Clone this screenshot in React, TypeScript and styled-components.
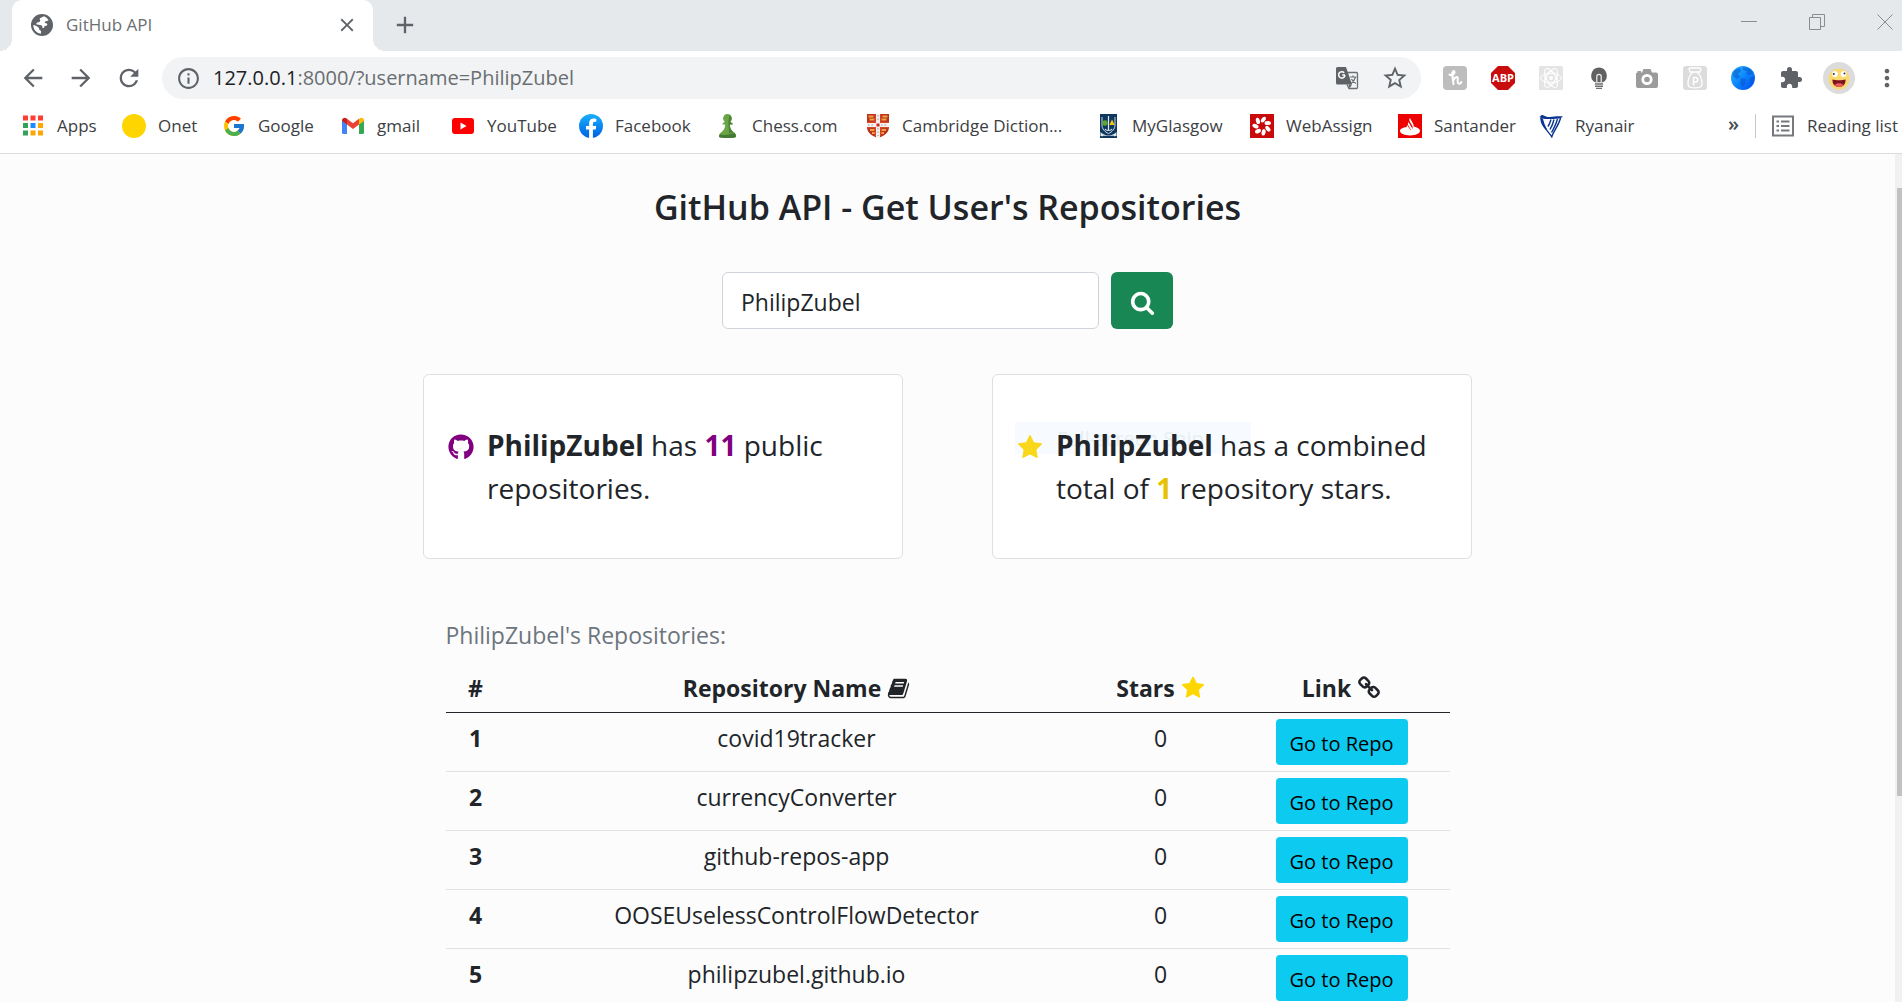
import React from 'react';
import styled, { createGlobalStyle } from 'styled-components';
import {
  MdArrowBack,
  MdArrowForward,
  MdRefresh,
  MdInfoOutline,
  MdStarBorder,
  MdExtension,
  MdMoreVert,
  MdClose,
  MdAdd,
} from 'react-icons/md';
import { FaGithub } from 'react-icons/fa';
import { FcGoogle } from 'react-icons/fc';

const Global = createGlobalStyle`
  *, *::before, *::after { box-sizing: border-box; }
  body {
    margin: 0;
    background: #fcfcfc;
    color: #212529;
    font-family: "Segoe UI", "Open Sans", "Noto Sans", sans-serif;
  }
  a { color: inherit; text-decoration: none; }
  button, input { font: inherit; }
`;

/* ---------- browser frame ---------- */

const Window = styled.div`
  display: flex;
  flex-direction: column;
  height: 100vh;
  overflow: hidden;
`;

const TabStrip = styled.div`
  display: flex;
  align-items: stretch;
  height: 51px;
  padding-left: 12px;
  background: #e6e9ec;
`;

const Tab = styled.div`
  position: relative;
  display: flex;
  align-items: center;
  width: 361px;
  padding: 0 14px 2px 18px;
  gap: 12px;
  background: #fff;
  border-radius: 10px 10px 0 0;
  color: #6b6f73;
  font-size: 17px;
  line-height: 24px;

  &::before,
  &::after {
    content: '';
    position: absolute;
    bottom: 0;
    width: 12px;
    height: 12px;
  }
  &::before {
    left: -12px;
    background: radial-gradient(circle at 0 0, transparent 12px, #fff 12px);
  }
  &::after {
    right: -12px;
    background: radial-gradient(circle at 100% 0, transparent 12px, #fff 12px);
  }
`;

const TabTitle = styled.span`
  flex: 1;
`;

const IconButton = styled.button<{ $size?: number; $color?: string }>`
  display: inline-flex;
  align-items: center;
  justify-content: center;
  flex: none;
  width: ${(p) => p.$size ?? 24}px;
  height: ${(p) => p.$size ?? 24}px;
  padding: 0;
  border: 0;
  background: none;
  color: ${(p) => p.$color ?? '#5f6368'};
  cursor: pointer;
`;

const NewTab = styled.div`
  display: flex;
  align-items: center;
  padding: 0 0 2px 18px;
`;

const WindowControls = styled.div`
  display: flex;
  align-items: center;
  gap: 44px;
  margin-left: auto;
  padding: 0 5px 7px 0;
`;

const Toolbar = styled.div`
  display: flex;
  align-items: center;
  height: 54px;
  padding: 0 1px 0 19px;
  background: #fff;
`;

const NavButtons = styled.div`
  display: flex;
  gap: 20px;
  margin-right: 19px;
`;

const Omnibox = styled.div`
  display: flex;
  align-items: center;
  flex: 1;
  min-width: 0;
  height: 42px;
  padding: 0 12px;
  border-radius: 21px;
  background: #f1f3f4;
`;

const Address = styled.div`
  flex: 1;
  min-width: 0;
  padding-left: 11px;
  overflow: hidden;
  white-space: nowrap;
  font-size: 20px;
  line-height: 28px;
  color: #6a6e72;
`;

const Host = styled.span`
  color: #202124;
`;

const OmniboxActions = styled.div`
  display: flex;
  gap: 20px;
`;

const Extensions = styled.div`
  display: flex;
  align-items: center;
  gap: 24px;
  margin: 0 18px 0 22px;
`;

const Account = styled.div`
  display: flex;
  align-items: center;
  gap: 16px;
`;

const BookmarksBar = styled.nav`
  display: flex;
  align-items: center;
  height: 49px;
  padding: 0 4px 7px 21px;
  border-bottom: 1px solid #dadce0;
  background: #fff;
  color: #3c4043;
  font-size: 17px;
  line-height: 24px;
  white-space: nowrap;
`;

const Bookmark = styled.a<{ $width?: number }>`
  display: flex;
  align-items: center;
  gap: 12px;
  flex: none;
  width: ${(p) => (p.$width ? `${p.$width}px` : 'auto')};

  & > svg {
    flex: none;
  }
`;

const BarEnd = styled.div`
  display: flex;
  align-items: center;
  margin-left: auto;
`;

const More = styled.button`
  padding: 0 16px 4px;
  border: 0;
  background: none;
  color: #4a4d51;
  font-size: 20px;
  font-weight: 600;
  line-height: 24px;
`;

const Divider = styled.span`
  width: 1px;
  height: 24px;
  margin-right: 15px;
  background: #c6c9cc;
`;

/* ---------- page ---------- */

const Viewport = styled.div`
  display: flex;
  flex: 1;
  min-height: 0;
`;

const Page = styled.main`
  flex: 1;
  min-width: 0;
  overflow: hidden;
  padding: 32px 16px 0;
`;

const ScrollTrack = styled.div`
  width: 7px;
  padding: 34px 0 0 2px;
  background: #f1f1f1;
`;

const ScrollThumb = styled.div`
  height: 608px;
  background: #c1c1c1;
`;

const Title = styled.h1`
  margin: 0 0 44px;
  font-size: 34px;
  font-weight: 600;
  line-height: 42px;
  text-align: center;
`;

const SearchForm = styled.form`
  display: flex;
  gap: 12px;
  max-width: 451px;
  margin: 0 auto 45px;
`;

const SearchInput = styled.input`
  flex: 1;
  min-width: 0;
  height: 57px;
  padding: 3px 18px 0;
  border: 1px solid #ced4da;
  border-radius: 6px;
  background: #fff;
  color: #212529;
  font-size: 23px;
  outline: 0;
`;

const SearchButton = styled.button`
  display: flex;
  align-items: center;
  justify-content: center;
  width: 62px;
  padding: 4px 0 0;
  border: 0;
  border-radius: 6px;
  background: #198754;
  color: #fff;
  cursor: pointer;
`;

const Cards = styled.section`
  display: flex;
  justify-content: space-between;
  gap: 24px;
  max-width: 1049px;
  margin: 0 auto 57px;
`;

const Card = styled.article`
  position: relative;
  z-index: 0;
  display: flex;
  gap: 13px;
  width: 480px;
  padding: 49px 24px 48px;
  border: 1px solid #dfdfdf;
  border-radius: 6px;
  background: #fff;
`;

const CardIcon = styled.span<{ $color: string }>`
  display: flex;
  align-items: center;
  justify-content: center;
  flex: none;
  width: 26px;
  height: 46px;
  color: ${(p) => p.$color};
`;

const CardText = styled.p`
  margin: 0;
  font-size: 28px;
  line-height: 43px;
`;

const Figure = styled.strong<{ $color: string }>`
  color: ${(p) => p.$color};
`;

const SnipHint = styled.span`
  position: absolute;
  z-index: -1;
  top: 47px;
  left: 22px;
  width: 236px;
  height: 32px;
  padding-left: 42px;
  background: #f7fbff;
  color: #e9eef1;
  font-size: 20px;
  line-height: 34px;
  pointer-events: none;
`;

const Repositories = styled.section`
  max-width: 1004px;
  margin: 0 auto;
`;

const Caption = styled.h2`
  margin: 0 0 10px;
  color: #6c757d;
  font-size: 23px;
  font-weight: 400;
  line-height: 38px;
`;

const Table = styled.table`
  width: 100%;
  border-collapse: collapse;
  table-layout: fixed;
  text-align: center;
  font-size: 23px;
  line-height: 38px;
`;

const Column = styled.col<{ $width?: number }>`
  width: ${(p) => (p.$width ? `${p.$width}px` : 'auto')};
`;

const HeadCell = styled.th`
  height: 48px;
  padding: 0;
  border-bottom: 1px solid #212529;
  font-weight: 700;

  & > svg {
    vertical-align: -3px;
  }
`;

const Cell = styled.td`
  height: 59px;
  padding: 6px 0;
  border-bottom: 1px solid #dee2e6;
  vertical-align: top;
`;

const RepoLink = styled.a`
  display: inline-block;
  width: 132px;
  height: 46px;
  padding-top: 2px;
  border-radius: 4px;
  background: #0dcaf0;
  color: #000;
  font-size: 20px;
  line-height: 46px;
  vertical-align: top;
`;

/* ---------- icons ---------- */

const SEARCH =
  'M1216 832q0-185-131.5-316.5t-316.5-131.5-316.5 131.5-131.5 316.5 131.5 316.5 316.5 131.5 316.5-131.5 131.5-316.5zm512 832q0 52-38 90t-90 38q-54 0-90-38l-343-342q-179 124-399 124-143 0-273.5-55.5t-225-150-150-225-55.5-273.5 55.5-273.5 150-225 225-150 273.5-55.5 273.5 55.5 225 150 150 225 55.5 273.5q0 220-124 399l343 343q37 37 37 90z';
const STAR =
  'M1728 647q0 22-26 48l-363 354 86 500q1 7 1 20 0 21-10.5 35.5t-30.5 14.5q-19 0-40-12l-449-236-449 236q-22 12-40 12-21 0-31.5-14.5t-10.5-35.5q0-6 2-20l86-500-364-354q-25-27-25-48 0-37 56-46l502-73 225-455q19-41 49-41t49 41l225 455 502 73q56 9 56 46z';
const BOOK =
  'M1703 478q40 57 18 129l-275 906q-19 64-76.5 107.5t-122.5 43.5h-923q-77 0-148.5-53.5t-99.5-131.5q-24-67-2-127 0-4 3-27t4-37q1-8-3-21.5t-3-19.5q2-11 8-21t16.5-23.5 16.5-23.5q23-38 45-91.5t30-91.5q3-10 .5-30t-.5-28q3-11 17-28t17-23q21-36 42-92t25-90q1-9-2.5-32t.5-28q4-13 22-30.5t22-22.5q19-26 42.5-84.5t27.5-96.5q1-8-3-25.5t-2-26.5q2-8 9-18t18-23 17-21q8-12 16.5-30.5t15-35 16-36 19.5-32 26.5-23.5 36-11.5 47.5 5.5l-1 3q38-9 51-9h761q74 0 114 56t18 130l-274 906q-36 119-71.5 153.5t-128.5 34.5h-869q-27 0-38 15-11 16-1 43 24 70 144 70h923q29 0 56-15.5t35-41.5l300-987q7-22 5-57 38 15 59 43zm-1064 2q-4 13 2 22.5t20 9.5h608q13 0 25.5-9.5t16.5-22.5l21-64q4-13-2-22.5t-20-9.5h-608q-13 0-25.5 9.5t-16.5 22.5zm-83 256q-4 13 2 22.5t20 9.5h608q13 0 25.5-9.5t16.5-22.5l21-64q4-13-2-22.5t-20-9.5h-608q-13 0-25.5 9.5t-16.5 22.5z';
const LINK =
  'M1520 1216q0-40-28-68l-208-208q-28-28-68-28-42 0-72 32 3 3 19 18.5t21.5 21.5 15 19 13 25.5 3.5 27.5q0 40-28 68t-68 28q-15 0-27.5-3.5t-25.5-13-19-15-21.5-21.5-18.5-19q-33 31-33 73 0 40 28 68l206 207q27 27 68 27 40 0 68-26l147-146q28-28 28-67zm-703-705q0-40-28-68l-206-207q-28-28-68-28-39 0-68 27l-147 146q-28 28-28 67 0 40 28 68l208 208q27 27 68 27 42 0 72-31-3-3-19-18.5t-21.5-21.5-15-19-13-25.5-3.5-27.5q0-40 28-68t68-28q15 0 27.5 3.5t25.5 13 19 15 21.5 21.5 18.5 19q33-31 33-73zm895 705q0 120-85 203l-147 146q-83 83-203 83-121 0-204-85l-206-207q-83-83-83-203 0-123 88-209l-88-88q-86 88-208 88-120 0-204-84l-208-208q-84-84-84-204t85-203l147-146q83-83 203-83 121 0 204 85l206 207q83 83 83 203 0 123-88 209l88 88q86-88 208-88 120 0 204 84l208 208q84 84 84 204z';

const Glyph = ({ d, size, color = 'currentColor' }: { d: string; size: number; color?: string }) => (
  <svg width={size} height={size} viewBox="0 0 1792 1792" fill={color} aria-hidden="true">
    <path d={d} />
  </svg>
);

const Svg = ({ children, size = 24 }: { children: React.ReactNode; size?: number }) => (
  <svg width={size} height={size} viewBox="0 0 24 24" aria-hidden="true">
    {children}
  </svg>
);

const TabGlobe = () => (
  <Svg>
    <circle cx="12" cy="12" r="11" fill="#5f6368" />
    <path
      d="M14 3.200C13 4 10.500 4.400 9.800 5.600C9.200 6.800 11 7.400 10 8.600C9 9.800 6.600 9 6.400 10.800C6.300 12 8 11.800 10 12C12 12.200 12.500 13 12.300 14.300C12.200 15.500 14 15.400 14.200 13.900C14.300 12.600 15.800 13 16.800 12.400C17.800 11.700 17.400 10.300 16 10.200C14.600 10.200 14.400 9.200 15.200 8.600C16.200 8 17.500 8.200 18.600 7.200C17.500 5.200 15.800 3.900 14 3.200Z"
      fill="#fff"
    />
    <path d="M3.300 12C5 12.400 7 13 8.500 14.500C9.500 15.600 8.800 17 10.400 17.600C11.600 18 11 19.400 10.800 20.700C6.300 20 3.200 16.300 3.300 12Z" fill="#fff" />
  </Svg>
);

const TranslateIcon = () => (
  <Svg>
    <path d="M12 6.500h9.500a1 1 0 0 1 1 1V21.500a1 1 0 0 1-1 1H14l-2-4" fill="none" stroke="#6b6f73" strokeWidth="1.300" />
    <path d="M2.500 1H11l6 17.500H2.500A1.500 1.500 0 0 1 1 17V2.500A1.500 1.500 0 0 1 2.500 1Z" fill="#5f6368" />
    <path d="M10 9H7.200M9.200 6.700A3.200 3.200 0 1 0 10 9.200" fill="none" stroke="#fff" strokeWidth="1.500" />
    <path d="M15 11h6.500M18 9.500V11M20.500 11C19.500 14.500 17.500 16.500 16 17.500M16.500 13C17.500 15 19.500 17 21 17.500" fill="none" stroke="#6b6f73" strokeWidth="1.200" />
    <path d="M13.500 18.500H17l-2.500 4z" fill="#5f6368" />
  </Svg>
);

const ReadingListIcon = () => (
  <Svg>
    <rect x="2" y="2.500" width="20" height="19" fill="none" stroke="#75797d" strokeWidth="2" />
    <path d="M5.500 7.500H8M5.500 12H8M5.500 16.500H8M10 7.500h8.500M10 12h8.500M10 16.500h8.500" stroke="#75797d" strokeWidth="2" />
  </Svg>
);

const AppsIcon = () => (
  <Svg>
    {['#ff3d33', '#ff3d33', '#ff3d33', '#34a05a', '#1a8cff', '#fba705', '#34a05a', '#fba705', '#fba705'].map((fill, i) => (
      <rect key={i} x={2 + (i % 3) * 7.5} y={1.5 + Math.floor(i / 3) * 7.5} width="5" height="5" fill={fill} />
    ))}
  </Svg>
);

const OnetIcon = () => (
  <Svg>
    <circle cx="12" cy="12" r="12" fill="#ffd500" />
  </Svg>
);

const GmailIcon = () => (
  <Svg>
    <path d="M1 6.500V18.500A1.500 1.500 0 0 0 2.500 20H6V9.800Z" fill="#4285f4" />
    <path d="M18 9.800V20h3.500A1.500 1.500 0 0 0 23 18.500V6.500Z" fill="#34a853" />
    <path d="M1 6.500C1 3.800 3.800 3.100 5.600 4.400L6 4.700V10.600L1 6.900Z" fill="#c5221f" />
    <path d="M6 4.700L12 9.200L18 4.700V10.600L12 15.100L6 10.600Z" fill="#ea4335" />
    <path d="M18 4.700L18.400 4.400C20.200 3.100 23 3.800 23 6.500V6.900L18 10.600Z" fill="#fbbc04" />
  </Svg>
);

const YoutubeIcon = () => (
  <Svg>
    <rect x="1" y="4" width="22" height="16" rx="3" fill="#f00" />
    <path d="M9.500 8.500v7l6-3.500z" fill="#fff" />
  </Svg>
);

const FacebookIcon = () => (
  <Svg>
    <defs>
      <linearGradient id="fb" x1="0" y1="0" x2="0" y2="1">
        <stop offset="0" stopColor="#19afff" />
        <stop offset="1" stopColor="#0062e0" />
      </linearGradient>
    </defs>
    <circle cx="12" cy="12" r="12" fill="url(#fb)" />
    <path d="M16.700 15.500L17.200 12h-3.300V9.700c0-1 .5-1.900 1.900-1.900h1.500V4.900s-1.400-.3-2.700-.3c-2.800 0-4.500 1.700-4.500 4.600V12H7v3.500h3.100v8.400a12 12 0 0 0 3.800 0v-8.400z" fill="#fff" />
  </Svg>
);

const ChessIcon = () => (
  <Svg>
    <path
      d="M11.500 0a4.300 4.300 0 0 0-2.700 7.700L6.500 9.400V10.600h2.700C9 14.500 8 16.300 5.600 18C3.800 19.200 3 20.600 3 22.500C3 23.500 6 24 11.500 24s8.500-.5 8.500-1.500c0-1.900-.8-3.300-2.600-4.500c-2.400-1.700-3.400-3.500-3.600-7.400H16.500V9.400L14.200 7.700A4.300 4.300 0 0 0 11.500 0z"
      fill="#69a545"
    />
    <path d="M3.800 20C7 22 14 21 18.200 18.600C19.500 19.800 20 21 20 22.500C20 23.500 17 24 11.500 24s-8.500-.5-8.500-1.500z" fill="#457a33" />
    <path d="M13.500 1A4.300 4.300 0 0 1 14.200 7.700L16.500 9.400V10.600H13.800C14 14.500 15 16.300 17.400 18L13 19.500C13 15 12.500 12 12.300 8Z" fill="#4c8338" />
  </Svg>
);

const CambridgeIcon = () => (
  <Svg>
    <path d="M1 0H23V13C23 19 18 22 12 24C6 22 1 19 1 13Z" fill="#b8321f" />
    <path d="M10 0h4v24h-4zM1 9h22v4H1z" fill="#f4f0ee" />
    <path d="M10.500 9.500h3v3h-3z" fill="#d3231a" />
    <path d="M2.500 2.500h5M16.500 2.500h5M3.500 5.500h5M15.500 5.500h5M4 16h4.500M15.500 16H20M6 19h3M15 19h3" stroke="#f0a53c" strokeWidth="2" />
    <path d="M12 1v7M12 14v8M2 11h7M15 11h7" stroke="#a39c9a" strokeWidth="1" strokeDasharray="1.500 2" />
    <path d="M9.200 0V8.300H1M14.800 0V8.300H23M1 13.700H9.200V22M23 13.700H14.800V22" fill="none" stroke="#e0452c" strokeWidth="1.200" />
  </Svg>
);

const GlasgowIcon = () => (
  <Svg>
    <rect x="4" width="17" height="24" fill="#10385f" />
    <path d="M6 3V11C6 15 9 18 12.500 19.500C16 18 19 15 19 11V3" fill="none" stroke="#c9d7e2" strokeWidth="1" />
    <path d="M12.500 2v15M9 15c1 2 6 2 7 0" stroke="#dfe8ef" strokeWidth="1.200" fill="none" />
    <circle cx="9" cy="9" r="2.700" fill="#5fa62e" />
    <path d="M16 5.500l2.700 5.500h-5.400z" fill="#f0c419" />
    <path d="M4.500 18c4 4.500 12 4.500 16 0v4c-5 1-11 1-16 0z" fill="#dfe9f0" />
    <path d="M7 22.500h11" stroke="#10385f" strokeWidth="1.500" />
  </Svg>
);

const WebAssignIcon = () => (
  <Svg>
    <rect width="24" height="24" fill="#c80a0a" />
    {[0, 51, 103, 154, 206, 257, 309].map((a) => (
      <ellipse key={a} cx="12" cy="5.500" rx="2" ry="3.200" fill="#fff" transform={`rotate(${a + 12} 12 12) rotate(25 12 5.5)`} />
    ))}
  </Svg>
);

const SantanderIcon = () => (
  <Svg>
    <rect width="24" height="24" fill="#ec0000" />
    <path
      d="M15.600 11.400c0-.7-.2-1.400-.6-2L12.300 4.800c-.2-.4-.3-.7-.4-1.100c-.7 1.300-.7 2.700 0 4l2.200 3.700c.7 1.200.7 2.500 0 3.600c-.1-.6-.2-1-.4-1.400l-3.300-5.500c-.7 1.300-.6 2.500.1 3.700l2.800 4.600c-.8-.4-3.400-4.200-4.300-5.500c-.4.800-.4 1.500-.2 2.200c-4.100.6-6.800 2-6.800 3.700c0 2.700 4.400 4.700 10 4.700s10-2 10-4.700c0-2-2.800-3.800-6.400-4.400z"
      fill="#fff"
    />
  </Svg>
);

const RyanairIcon = () => (
  <Svg>
    <path d="M.500 3L3 .8L7 2.500C12 4 17 1.500 24 2.500C22 4.500 19 4.800 14 5C9 5.200 5 5 3.800 4.800Z" fill="#0a3590" />
    <path d="M2 4C2 12 8 15.500 12.800 22.800C14.500 17 20 11 21.500 4M12 5.500C11 9 10 11 9 12.500M15 5.500C14 10 12.500 13 11 15.500M18.500 5C17 11 14.500 14.500 12.600 18.500" fill="none" stroke="#0a3590" strokeWidth="1.400" />
    <path d="M1.500 3.500C2 10 5 13 8.500 16.500L5.500 10L4 5Z" fill="#0a3590" />
  </Svg>
);

const HoneyIcon = () => (
  <Svg>
    <rect width="24" height="24" rx="4" fill="#bdbdbd" />
    <path
      d="M6.500 8.500C8 10 12 8.500 11.500 5.800C11 4 8.500 5.500 9.300 9L10.500 18.200M10.700 14C12 10.500 15 10 14.800 12.500C14.800 14.500 13.800 18 16.500 17.800C18 17.600 18.300 16 18.300 16"
      fill="none"
      stroke="#fff"
      strokeWidth="2"
      strokeLinecap="round"
    />
  </Svg>
);

const AbpIcon = () => (
  <Svg>
    <path d="M7 0h10l7 7v10l-7 7H7l-7-7V7z" fill="#c70d0d" />
    <text x="12" y="16" textAnchor="middle" fontFamily="Open Sans, sans-serif" fontWeight="700" fontSize="11" fill="#fff">
      ABP
    </text>
  </Svg>
);

const AtomIcon = () => (
  <Svg>
    <rect width="24" height="24" rx="1" fill="#e4e4e4" />
    {[0, 60, 120].map((a) => (
      <ellipse key={a} cx="12" cy="12" rx="10.500" ry="4.500" fill="none" stroke="#fff" strokeWidth="1" transform={`rotate(${a} 12 12)`} />
    ))}
    <circle cx="12" cy="12" r="6.500" fill="none" stroke="#fff" strokeWidth=".8" />
    <circle cx="12" cy="12" r="2" fill="#fff" />
  </Svg>
);

const BulbIcon = () => (
  <Svg>
    <path d="M12 1.500A8 8 0 0 0 8 16.300H16A8 8 0 0 0 12 1.500Z" fill="#616161" />
    <path d="M9.800 16V10.500A2.200 2.200 0 0 1 14.200 10.500V16" fill="none" stroke="#e8e8e8" strokeWidth="1.300" />
    <path d="M8 18h8M8 20.200h8M9 22.400h6" stroke="#707070" strokeWidth="1.400" />
  </Svg>
);

const CameraIcon = () => (
  <Svg>
    <path d="M1 7.500a2 2 0 0 1 1.500-1V5H6v1.500h1L8.500 3h7L17 6.500h4a2 2 0 0 1 2 2V20a2 2 0 0 1-2 2H3a2 2 0 0 1-2-2z" fill="#9b9b9b" />
    <circle cx="12" cy="13.500" r="4.200" fill="none" stroke="#fff" strokeWidth="2.800" />
  </Svg>
);

const PotionIcon = () => (
  <Svg>
    <rect width="24" height="24" rx="3" fill="#dcdcdc" />
    <path d="M7 2h10l1 1-1 3H7L6 3zM9.500 6.500C5 10 4 18 6 20.500C7 22.300 17 22.300 18 20.500C20 18 19 10 14.500 6.500" fill="none" stroke="#fff" strokeWidth="1.300" />
    <path d="M10.500 19.500V11.500H12.500A2 2 0 0 1 12.500 16H10.500" fill="none" stroke="#fff" strokeWidth="1.500" />
  </Svg>
);

const EarthIcon = () => (
  <Svg>
    <defs>
      <linearGradient id="sea" x1="0" y1="0" x2="1" y2="1">
        <stop offset="0" stopColor="#2bb8ff" />
        <stop offset=".5" stopColor="#0b86fb" />
        <stop offset="1" stopColor="#0146f0" />
      </linearGradient>
    </defs>
    <circle cx="12" cy="12" r="12" fill="url(#sea)" />
    <path d="M1 8C3 4 5 3 9 2L10 5L7 8L9 11L6 13L3 11ZM12 1L19 3L22 7L18 9L15 8L16 5L12 4ZM10 12L15 13L14 18L11 21L9 17ZM19 12L23 11L22 16L19 18Z" fill="#064fc4" opacity=".5" />
  </Svg>
);

const AvatarIcon = () => (
  <svg width="32" height="32" viewBox="0 0 32 32" aria-hidden="true">
    <circle cx="16" cy="16" r="16" fill="#dcdcdc" />
    <circle cx="16" cy="17" r="10.500" fill="#fbd970" />
    <ellipse cx="12" cy="12" rx="2.800" ry="3" fill="#fff" />
    <ellipse cx="20.500" cy="12" rx="2.800" ry="3" fill="#fff" />
    <circle cx="10.800" cy="12" r="1" fill="#333" />
    <circle cx="21.500" cy="11.500" r="1" fill="#333" />
    <path d="M9.500 17.500C13 18.500 19 18.500 22.500 17.500C23 22 20 25 16 25S9 22 9.500 17.500Z" fill="#7c1420" />
    <path d="M11.500 23C13.500 20.500 18.500 20.500 20.500 23C18 25.600 14 25.600 11.500 23Z" fill="#ee5a5a" />
  </svg>
);

const bookmarks = [
  { label: 'Apps', width: 101, icon: <AppsIcon /> },
  { label: 'Onet', width: 100, icon: <OnetIcon /> },
  { label: 'Google', width: 119, icon: <FcGoogle size={24} /> },
  { label: 'gmail', width: 110, icon: <GmailIcon /> },
  { label: 'YouTube', width: 128, icon: <YoutubeIcon /> },
  { label: 'Facebook', width: 137, icon: <FacebookIcon /> },
  { label: 'Chess.com', width: 150, icon: <ChessIcon /> },
  { label: 'Cambridge Diction...', width: 230, icon: <CambridgeIcon /> },
  { label: 'MyGlasgow', width: 154, icon: <GlasgowIcon /> },
  { label: 'WebAssign', width: 148, icon: <WebAssignIcon /> },
  { label: 'Santander', width: 141, icon: <SantanderIcon /> },
  { label: 'Ryanair', width: undefined, icon: <RyanairIcon /> },
];

const extensions = [
  { label: 'Honey', icon: <HoneyIcon /> },
  { label: 'Adblock Plus', icon: <AbpIcon /> },
  { label: 'React tools', icon: <AtomIcon /> },
  { label: 'Lights', icon: <BulbIcon /> },
  { label: 'Screenshot', icon: <CameraIcon /> },
  { label: 'Potion', icon: <PotionIcon /> },
  { label: 'Globe', icon: <EarthIcon /> },
  { label: 'Extensions', icon: <MdExtension size={26} /> },
];

const username = 'PhilipZubel';

const repositories = [
  { name: 'covid19tracker', stars: 0 },
  { name: 'currencyConverter', stars: 0 },
  { name: 'github-repos-app', stars: 0 },
  { name: 'OOSEUselessControlFlowDetector', stars: 0 },
  { name: 'philipzubel.github.io', stars: 0 },
];

const BrowserChrome = () => (
  <header>
    <TabStrip>
      <Tab>
        <TabGlobe />
        <TabTitle>GitHub API</TabTitle>
        <IconButton aria-label="Close tab">
          <MdClose size={22} />
        </IconButton>
      </Tab>
      <NewTab>
        <IconButton aria-label="New tab" $size={28}>
          <MdAdd size={28} />
        </IconButton>
      </NewTab>
      <WindowControls>
        <IconButton aria-label="Minimize" $color="#8a8d90">
          <Svg>
            <path d="M4 11.500h16" stroke="currentColor" />
          </Svg>
        </IconButton>
        <IconButton aria-label="Restore" $color="#8a8d90">
          <Svg>
            <path d="M4.500 7.500h11v12h-11zM7.500 7.500v-3h12v12h-4" fill="none" stroke="currentColor" />
          </Svg>
        </IconButton>
        <IconButton aria-label="Close" $color="#8a8d90">
          <Svg>
            <path d="M4.500 4.500l15 15M19.500 4.500l-15 15" stroke="currentColor" />
          </Svg>
        </IconButton>
      </WindowControls>
    </TabStrip>
    <Toolbar>
      <NavButtons>
        <IconButton aria-label="Back" $size={28}>
          <MdArrowBack size={30} />
        </IconButton>
        <IconButton aria-label="Forward" $size={28}>
          <MdArrowForward size={30} />
        </IconButton>
        <IconButton aria-label="Reload" $size={28}>
          <MdRefresh size={30} />
        </IconButton>
      </NavButtons>
      <Omnibox>
        <IconButton aria-label="Site information" $size={28}>
          <MdInfoOutline size={25} />
        </IconButton>
        <Address role="textbox" aria-label="Address" tabIndex={0}>
          <Host>127.0.0.1</Host>:8000/?username=PhilipZubel
        </Address>
        <OmniboxActions>
          <IconButton aria-label="Translate" $size={28}>
            <TranslateIcon />
          </IconButton>
          <IconButton aria-label="Bookmark this page" $size={28}>
            <MdStarBorder size={28} />
          </IconButton>
        </OmniboxActions>
      </Omnibox>
      <Extensions>
        {extensions.map((item) => (
          <IconButton key={item.label} aria-label={item.label}>
            {item.icon}
          </IconButton>
        ))}
      </Extensions>
      <Account>
        <IconButton aria-label="Profile" $size={36}>
          <AvatarIcon />
        </IconButton>
        <IconButton aria-label="Menu" $size={28}>
          <MdMoreVert size={30} />
        </IconButton>
      </Account>
    </Toolbar>
    <BookmarksBar aria-label="Bookmarks">
      {bookmarks.map((item) => (
        <Bookmark key={item.label} href="#" $width={item.width}>
          {item.icon}
          {item.label}
        </Bookmark>
      ))}
      <BarEnd>
        <More aria-label="More bookmarks">»</More>
        <Divider />
        <Bookmark href="#">
          <ReadingListIcon />
          Reading list
        </Bookmark>
      </BarEnd>
    </BookmarksBar>
  </header>
);

export default function App() {
  return (
    <Window>
      <Global />
      <BrowserChrome />
      <Viewport>
        <Page>
          <Title>GitHub API - Get User's Repositories</Title>
          <SearchForm onSubmit={(event) => event.preventDefault()}>
            <SearchInput name="username" aria-label="GitHub username" defaultValue={username} />
            <SearchButton type="submit" aria-label="Search">
              <Glyph d={SEARCH} size={25} />
            </SearchButton>
          </SearchForm>
          <Cards>
            <Card>
              <CardIcon $color="#800080">
                <FaGithub size={26} />
              </CardIcon>
              <CardText>
                <strong>{username}</strong> has <Figure $color="#800080">11</Figure> public repositories.
              </CardText>
            </Card>
            <Card>
              <SnipHint aria-hidden="true">Full-screen Snip</SnipHint>
              <CardIcon $color="#f9d71a">
                <Glyph d={STAR} size={29} />
              </CardIcon>
              <CardText>
                <strong>{username}</strong> has a combined total of <Figure $color="#e6c200">1</Figure> repository stars.
              </CardText>
            </Card>
          </Cards>
          <Repositories>
            <Caption>{username}'s Repositories:</Caption>
            <Table>
              <colgroup>
                <Column $width={60} />
                <Column />
                <Column $width={146} />
                <Column $width={216} />
              </colgroup>
              <thead>
                <tr>
                  <HeadCell scope="col">#</HeadCell>
                  <HeadCell scope="col">
                    Repository Name <Glyph d={BOOK} size={23} />
                  </HeadCell>
                  <HeadCell scope="col">
                    Stars <Glyph d={STAR} size={24} color="#ffd700" />
                  </HeadCell>
                  <HeadCell scope="col">
                    Link <Glyph d={LINK} size={24} />
                  </HeadCell>
                </tr>
              </thead>
              <tbody>
                {repositories.map((repo, index) => (
                  <tr key={repo.name}>
                    <Cell as="th" scope="row">
                      {index + 1}
                    </Cell>
                    <Cell>{repo.name}</Cell>
                    <Cell>{repo.stars}</Cell>
                    <Cell>
                      <RepoLink href={`https://github.com/${username}/${repo.name}`}>Go to Repo</RepoLink>
                    </Cell>
                  </tr>
                ))}
              </tbody>
            </Table>
          </Repositories>
        </Page>
        <ScrollTrack>
          <ScrollThumb />
        </ScrollTrack>
      </Viewport>
    </Window>
  );
}
